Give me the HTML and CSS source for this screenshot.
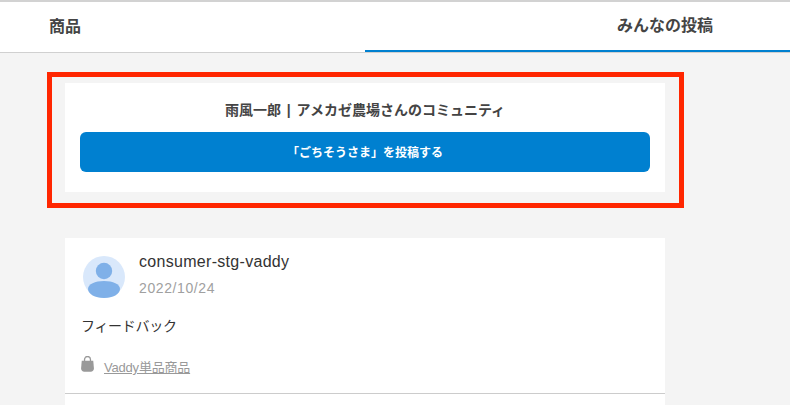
FILE: index.html
```html
<!DOCTYPE html>
<html lang="ja">
<head>
    <meta charset="UTF-8">
    <meta name="viewport" content="width=device-width, initial-scale=1.0">
    <title>みんなの投稿</title>
    <link rel="stylesheet" href="styles.css">
</head>
<body>
    <div class="tabs">
        <a class="tab tab-items">商品</a>
        <a class="tab tab-posts">みんなの投稿</a>
    </div>

    <div class="content">
        <div class="community">
            <div class="community-title">雨風一郎 | アメカゼ農場さんのコミュニティ</div>
            <a class="post-btn">「ごちそうさま」を投稿する</a>
            <!-- red annotation frame around the card -->
            <div class="highlight"></div>
        </div>

        <div class="post">
            <div class="post-head">
                <svg class="avatar" viewBox="0 0 42 42">
                    <circle cx="21" cy="21" r="21" fill="#d9e8fb"/>
                    <circle cx="21" cy="15" r="8.2" fill="#7fb0e8"/>
                    <path d="M5 33c0-5 7-8 16-8s16 3 16 8c0 5-7 9-16 9S5 38 5 33z" fill="#7fb0e8"/>
                </svg>
                <div>
                    <div class="post-user">consumer-stg-vaddy</div>
                    <div class="post-date">2022/10/24</div>
                </div>
            </div>
            <p class="post-text">フィードバック</p>
            <div class="post-item">
                <svg class="bag" viewBox="0 0 14 17">
                    <path d="M3.800 6V3.600a3.200 3.200 0 0 1 6.400 0V6" fill="none" stroke="#999" stroke-width="1.400"/>
                    <path d="M.8 5h12.400l.7 8c.2 2.300-1.400 3.800-3.400 3.800H3.500c-2 0-3.600-1.500-3.400-3.800z" fill="#999"/>
                </svg>
                <a class="item-link">Vaddy単品商品</a>
            </div>
        </div>
    </div>
</body>
</html>
```

FILE: styles.css
```css
html, body {
  height: 100%;
}

body {
  margin: 0;
  overflow: hidden;
  background-color: #f4f4f4;
  color: #333;
  font-family: "Liberation Sans", "Noto Sans CJK JP", sans-serif;
}

.tabs {
  display: flex;
  height: 50px;
  border-top: 2px solid #d2d2d2;
  border-bottom: 1px solid #d0d0d0;
  background-color: #fff;
}

.tab {
  box-sizing: border-box;
  font-size: 16px;
  font-weight: bold;
  line-height: 50px;
  color: #444;
}

.tab-items {
  width: 365px;
  padding-left: 49px;
}

.tab-posts {
  flex: 1;
  height: 50px;
  padding-left: 252px;
  line-height: 48px;
  border-bottom: 2px solid #0080d0;
}

.content {
  width: 600px;
  margin-left: 65px;
  padding-top: 30px;
}

.community {
  position: relative;
  box-sizing: border-box;
  height: 109px;
  padding: 17px 15px 0;
  background-color: #fff;
  text-align: center;
}

.community-title {
  font-size: 14px;
  font-weight: bold;
  line-height: 20px;
  word-spacing: 2px;
  color: #444;
}

.post-btn {
  display: block;
  height: 40px;
  margin-top: 12px;
  border-radius: 6px;
  background-color: #0080d0;
  color: #fff;
  font-size: 12px;
  font-weight: bold;
  line-height: 42px;
}

.highlight {
  position: absolute;
  top: -11px;
  left: -18px;
  width: 627px;
  height: 126px;
  border: 5px solid #ff2600;
}

.post {
  height: 167px;
  margin-top: 46px;
  background-color: #fff;
  box-sizing: border-box;
  position: relative;
  padding: 14px 0 0 17px;
}

.post-head {
  display: flex;
  gap: 14px;
}

.avatar {
  width: 42px;
  height: 42px;
  margin: 4px 0 0 1px;
}

.post-user {
  font-size: 16px;
  letter-spacing: 0.3px;
  line-height: 20px;
}

.post-date {
  margin-top: 7px;
  font-size: 14px;
  letter-spacing: 0.6px;
  line-height: 18px;
  color: #a0a0a0;
}

.post-text {
  margin: 18px 0 0 -1px;
  font-size: 14px;
  letter-spacing: -0.3px;
  line-height: 20px;
}

.post-item {
  display: flex;
  align-items: flex-start;
  gap: 10px;
  margin-top: 20px;
  padding-bottom: 15px;
  margin-left: -17px;
  padding-left: 16px;
  border-bottom: 1px solid #ccc;
}

.bag {
  width: 13px;
  height: 16px;
}

.item-link {
  margin-top: 2px;
  font-size: 13px;
  letter-spacing: -0.2px;
  line-height: 20px;
  color: #999;
  text-decoration: underline;
}
```
